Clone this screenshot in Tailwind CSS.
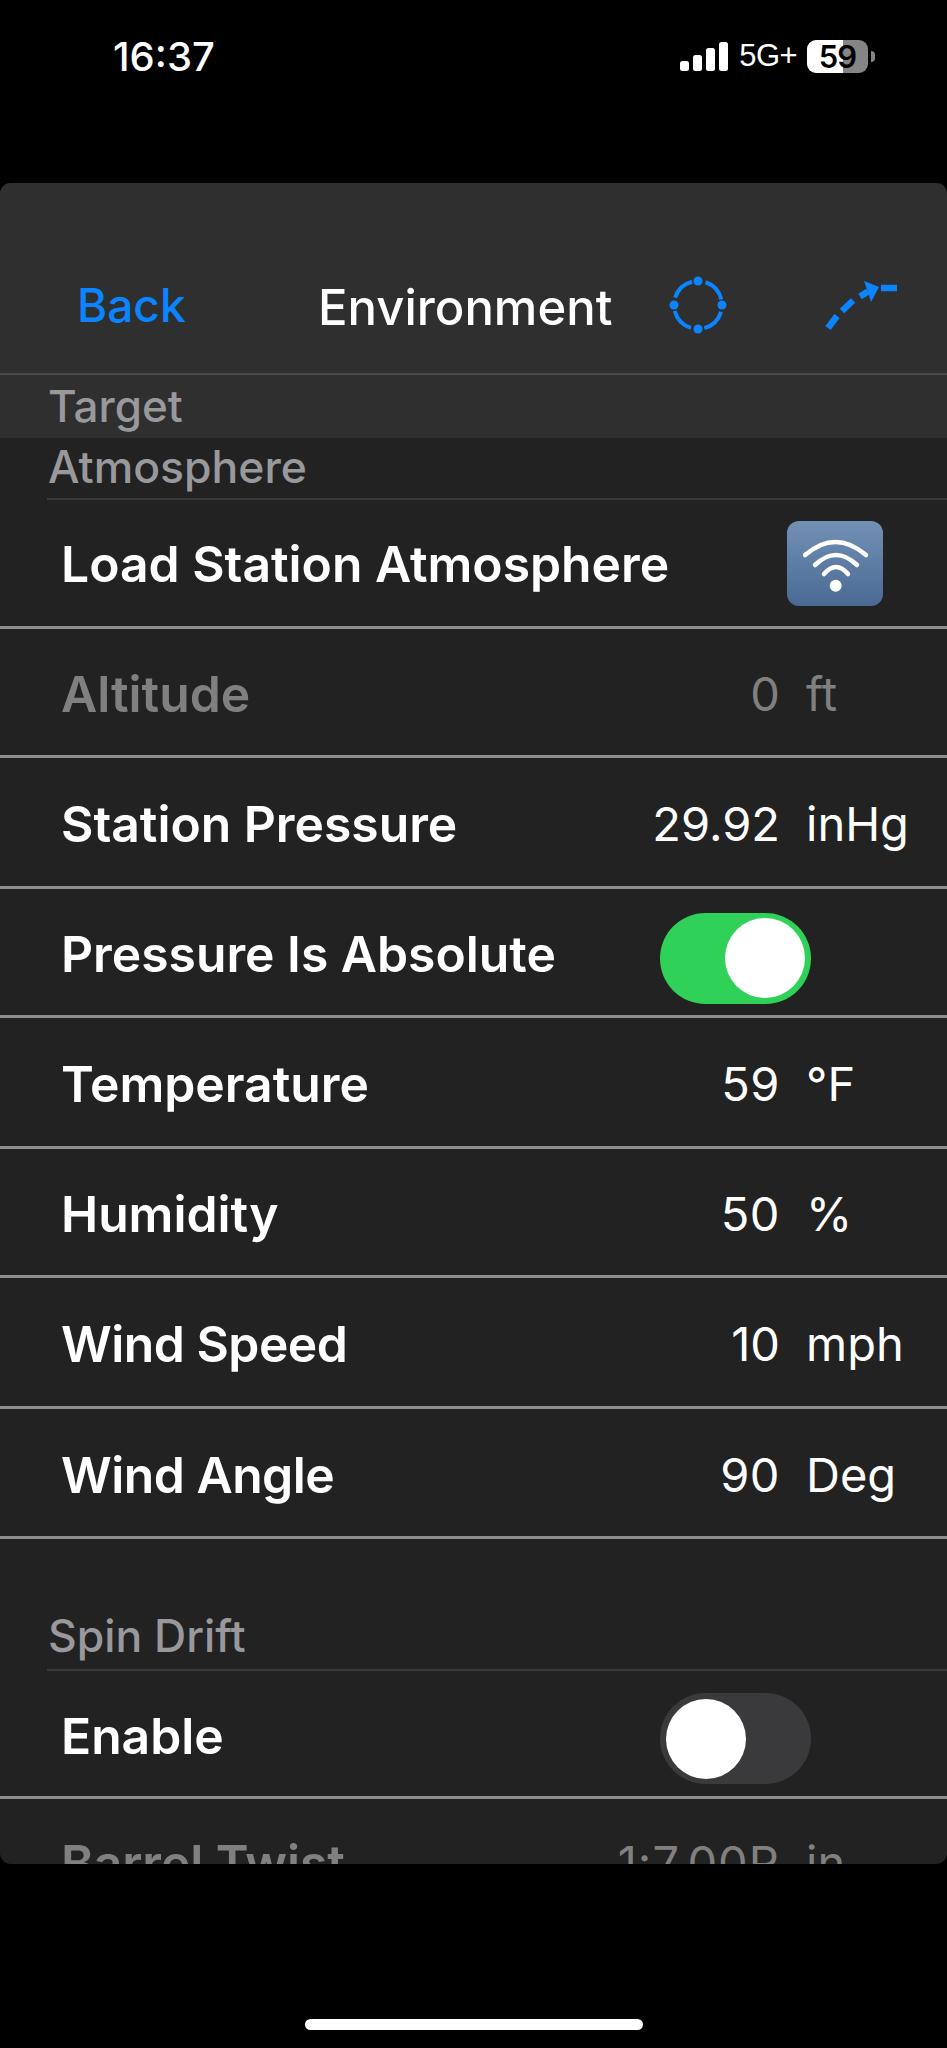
<!DOCTYPE html>
<html>
<head>
<meta charset="utf-8">
<script src="https://cdn.jsdelivr.net/npm/@tailwindcss/browser@4"></script>
</head>
<body class="bg-black">
<div class="w-[947px] h-[2048px] bg-black flex flex-col overflow-hidden font-['Inter','Liberation_Sans',sans-serif] text-white">
  <!-- status bar -->
  <div class="h-[183px] shrink-0 flex items-start justify-between pt-[34px] pl-[113px] pr-[72px]">
    <span class="mt-[1px] text-[40px] leading-[44px] font-medium">16:37</span>
    <div class="flex items-center h-[44px]">
      <svg width="48" height="29" viewBox="0 0 48 29" fill="#fff"><rect x="0" y="19" width="9" height="10" rx="2.5"/><rect x="13" y="13" width="9" height="16" rx="2.5"/><rect x="26" y="6" width="9" height="23" rx="2.5"/><rect x="39" y="0" width="9" height="29" rx="2.5"/></svg>
      <span class="ml-[11px] text-[31px] leading-[32px] tracking-[-0.6px] font-['Liberation_Sans',sans-serif]">5G+</span>
      <div class="relative flex items-center ml-[10px]">
        <div class="w-[61px] h-[33px] rounded-[9px] overflow-hidden flex">
          <div class="w-[36px] bg-white"></div>
          <div class="flex-1 bg-[#858585]"></div>
        </div>
        <span class="absolute left-0 w-[61px] text-center text-[31px] leading-[33px] tracking-[-1px] font-semibold text-black">59</span>
        <div class="w-[4px] h-[11px] bg-[#858585] rounded-r-full ml-[3px]"></div>
      </div>
    </div>
  </div>

  <!-- panel -->
  <div class="h-[1681px] shrink-0 bg-[#222222] rounded-[11px] overflow-hidden flex flex-col">
    <!-- nav -->
    <div class="h-[192px] shrink-0 bg-[#2f2f2f] border-b-2 border-[#4a4a4a] flex items-center pt-[54px] pl-[77px]">
      <span class="w-[241px] shrink-0 text-[46px] leading-[54px] font-medium text-[#0a84ff]">Back</span>
      <span class="w-[350px] shrink-0 mt-[6px] text-[49px] leading-[56px] font-medium">Environment</span>
      <svg class="shrink-0" width="60" height="60" viewBox="0 0 60 60" fill="none" stroke="#0a84ff" stroke-width="4">
        <circle cx="30" cy="30" r="24" stroke-dasharray="24 13.7" stroke-dashoffset="-7"/>
        <g fill="#0a84ff" stroke="none"><circle cx="30" cy="6" r="4.5"/><circle cx="30" cy="54" r="4.5"/><circle cx="6" cy="30" r="4.5"/><circle cx="54" cy="30" r="4.5"/></g>
      </svg>
      <svg class="shrink-0 ml-[94px]" width="78" height="60" viewBox="0 0 78 60" fill="none" stroke="#0a84ff" stroke-width="6.5">
        <path d="M6 53 L15 41"/><path d="M20 36 L31 25.5"/><path d="M38 21.5 L46 16.5"/>
        <path d="M42 6 L57 12 L49 27 L46.5 18.5 Z" fill="#0a84ff" stroke="none"/>
        <path d="M59 13 H75"/>
      </svg>
    </div>
    <!-- target header -->
    <div class="h-[63px] shrink-0 bg-[#2f2f2f] pl-[48px] pb-[2px] flex items-center">
      <span class="text-[44px] leading-[46px] font-medium text-[#98989d]">Target</span>
    </div>
    <!-- atmosphere header -->
    <div class="h-[60px] shrink-0 pl-[48px] pb-[2px] flex items-center">
      <span class="text-[44.5px] leading-[46px] font-medium text-[#98989d]">Atmosphere</span>
    </div>
    <div class="h-[2px] shrink-0 ml-[47px] bg-[#3a3a3c]"></div>

    <!-- rows -->
    <div class="h-[129px] shrink-0 flex items-center justify-between pl-[61px] pr-[64px] border-b-[3px] border-[#8e8e8e]">
      <span class="mt-[3px] text-[49.8px] font-semibold">Load Station Atmosphere</span>
      <div class="w-[96px] h-[85px] rounded-[12px] bg-gradient-to-b from-[#7391b5] to-[#4a6a94]">
        <svg width="96" height="85" viewBox="0 0 96 85" fill="none" stroke="#fff" stroke-width="4.5" stroke-linecap="round">
          <path d="M18 34 Q48.5 8 79 34"/><path d="M28 44 Q49 24 70 44"/><path d="M37 53 Q49 39 61 53"/>
          <circle cx="48.7" cy="64.7" r="6" fill="#fff" stroke="none"/>
        </svg>
      </div>
    </div>
    <div class="h-[129px] shrink-0 flex items-center pl-[61px] pt-[5px] border-b-[3px] border-[#8e8e8e]">
      <span class="w-[500px] text-[49.8px] font-semibold text-[#808080]">Altitude</span>
      <span class="w-[219px] text-right text-[47px] text-[#808080]">0</span>
      <span class="ml-[26px] text-[47px] text-[#808080]">ft</span>
    </div>
    <div class="h-[131px] shrink-0 flex items-center pl-[61px] pt-[5px] border-b-[3px] border-[#8e8e8e]">
      <span class="w-[500px] text-[49.8px] font-semibold">Station Pressure</span>
      <span class="w-[219px] text-right text-[47px]">29.92</span>
      <span class="ml-[26px] text-[47px]">inHg</span>
    </div>
    <div class="h-[129px] shrink-0 flex items-center pl-[61px] pt-[5px] border-b-[3px] border-[#8e8e8e]">
      <span class="w-[599px] text-[49.8px] font-semibold">Pressure Is Absolute</span>
      <div class="w-[151px] h-[91px] mt-[7px] rounded-full bg-[#30d158] flex items-center justify-end pr-[6px]">
        <div class="w-[80px] h-[80px] rounded-full bg-white"></div>
      </div>
    </div>
    <div class="h-[131px] shrink-0 flex items-center pl-[61px] pt-[5px] border-b-[3px] border-[#8e8e8e]">
      <span class="w-[500px] text-[49.8px] font-semibold">Temperature</span>
      <span class="w-[219px] text-right text-[47px] tracking-[0.5px]">59</span>
      <span class="ml-[26px] text-[47px]">°F</span>
    </div>
    <div class="h-[129px] shrink-0 flex items-center pl-[61px] pt-[5px] border-b-[3px] border-[#8e8e8e]">
      <span class="w-[500px] text-[49.8px] font-semibold">Humidity</span>
      <span class="w-[219px] text-right text-[47px] tracking-[0.5px]">50</span>
      <span class="ml-[26px] text-[47px]">%</span>
    </div>
    <div class="h-[131px] shrink-0 flex items-center pl-[61px] pt-[5px] border-b-[3px] border-[#8e8e8e]">
      <span class="w-[500px] text-[49.8px] tracking-[-0.5px] font-semibold">Wind Speed</span>
      <span class="w-[219px] text-right text-[47px]">10</span>
      <span class="ml-[26px] text-[47px]">mph</span>
    </div>
    <div class="h-[130px] shrink-0 flex items-center pl-[61px] pt-[5px] border-b-[3px] border-[#8e8e8e]">
      <span class="w-[500px] text-[49.8px] tracking-[-0.5px] font-semibold">Wind Angle</span>
      <span class="w-[219px] text-right text-[47px] tracking-[0.5px]">90</span>
      <span class="ml-[26px] text-[47px]">Deg</span>
    </div>

    <!-- spin drift -->
    <div class="h-[130px] shrink-0 pl-[48px] flex items-end pb-[10px]">
      <span class="text-[44.5px] leading-[46px] font-medium text-[#98989d]">Spin Drift</span>
    </div>
    <div class="h-[2px] shrink-0 ml-[47px] bg-[#3a3a3c]"></div>
    <div class="h-[128px] shrink-0 flex items-center pl-[61px] pt-[5px] border-b-[3px] border-[#8e8e8e]">
      <span class="w-[599px] text-[49.8px] font-semibold">Enable</span>
      <div class="w-[151px] h-[91px] mt-[5px] rounded-full bg-[#3a3a3c] flex items-center pl-[6px]">
        <div class="w-[80px] h-[80px] rounded-full bg-white"></div>
      </div>
    </div>
    <div class="h-[129px] shrink-0 flex items-center pl-[61px]">
      <span class="w-[500px] text-[49.8px] tracking-[-0.1px] font-semibold text-[#808080]">Barrel Twist</span>
      <span class="w-[219px] text-right text-[47px] tracking-[1px] text-[#808080]">1:7.00R</span>
      <span class="ml-[26px] text-[47px] text-[#808080]">in</span>
    </div>
  </div>

  <!-- home indicator -->
  <div class="flex-1 flex justify-center items-start pt-[155px]">
    <div class="w-[338px] h-[11px] rounded-full bg-white"></div>
  </div>
</div>
</body>
</html>
